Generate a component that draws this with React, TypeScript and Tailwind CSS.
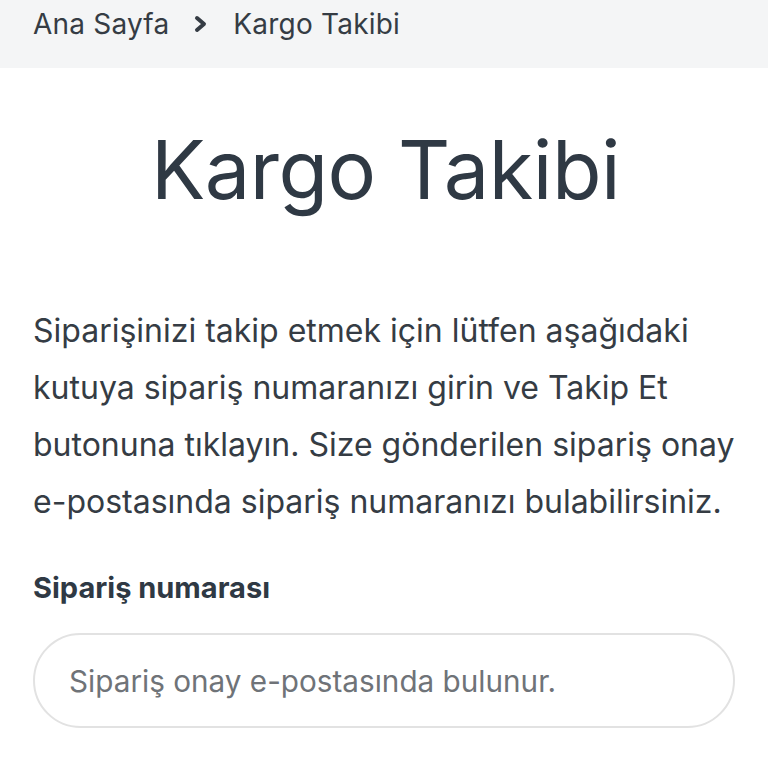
export default function App() {
  return (
    <div className="min-h-[768px] bg-white font-['Inter',sans-serif] text-[#353c44]">
      <nav className="h-[68px] bg-[#f4f5f6] px-[33px] flex items-start pt-[4px]">
        <ol className="flex items-center gap-[24px] text-[28px] leading-[40px] tracking-[0.2px]">
          <li>Ana Sayfa</li>
          <li className="flex items-center">
            <svg width="16" height="18" viewBox="0 0 16 18" className="text-[#353c44]">
              <path d="M4 3 L11 9 L4 15" fill="none" stroke="currentColor" strokeWidth="4" strokeLinecap="round" strokeLinejoin="round" />
            </svg>
          </li>
          <li>Kargo Takibi</li>
        </ol>
      </nav>

      <main className="pl-[33px] pr-[30px]">
        <h1 className="mt-[52px] text-center text-[81px] leading-[100px] font-normal text-[#2f3944] tracking-[-0.5px]">
          Kargo Takibi
        </h1>

        <p className="mt-[82px] text-[32px] leading-[57px] tracking-[0px] text-[#353c44]">
          Siparişinizi takip etmek için lütfen aşağıdaki kutuya sipariş numaranızı girin ve Takip Et butonuna tıklayın. Size gönderilen sipariş onay e-postasında sipariş numaranızı bulabilirsiniz.
        </p>

        <form className="mt-[38px] pr-[3px]">
          <label className="block text-[29px] leading-[40px] font-bold text-[#2f3944]">Sipariş numarası</label>
          <input
            type="text"
            placeholder="Sipariş onay e-postasında bulunur."
            className="mt-[25px] block w-full h-[95px] rounded-full border-2 border-[#e2e2e2] px-[34px] text-[29.7px] placeholder:text-[#6f7378] outline-none"
          />
        </form>
      </main>
    </div>
  );
}
